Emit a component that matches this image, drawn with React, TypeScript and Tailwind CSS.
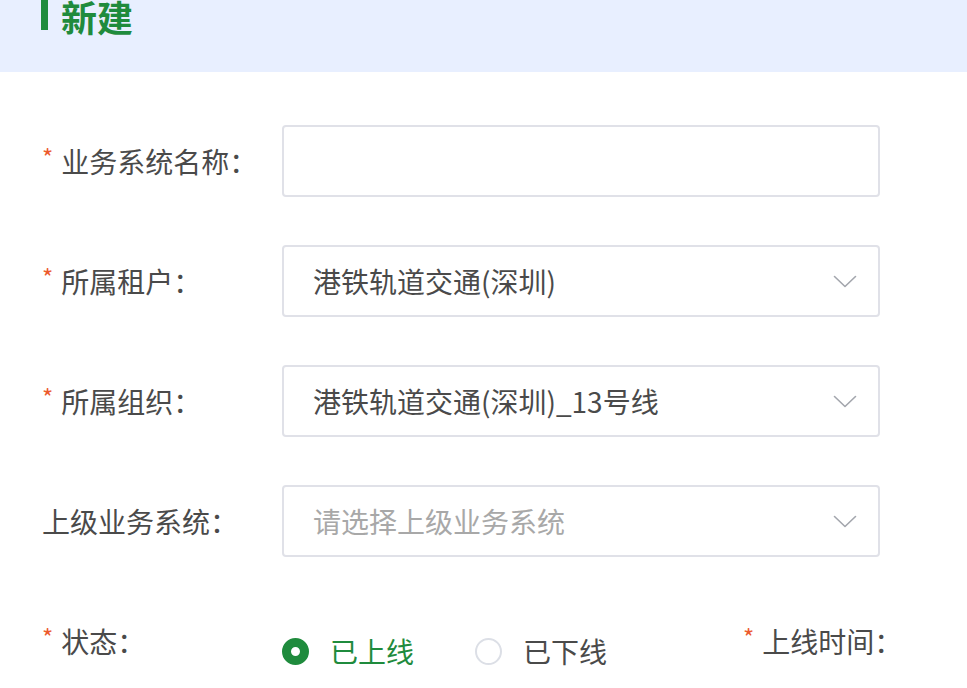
import { ReactNode } from 'react';

const FONT = { fontFamily: '"Noto Sans CJK SC", "Noto Sans", sans-serif' };

function Chevron() {
  return (
    <svg width="24" height="13" viewBox="0 0 24 13" fill="none" className="shrink-0">
      <path d="M1.5 1.5 L12 11.5 L22.5 1.5" stroke="#a3a6ad" strokeWidth="1.6" strokeLinecap="round" strokeLinejoin="round" />
    </svg>
  );
}

function Label({ children, required }: { children: ReactNode; required?: boolean }) {
  return (
    <div className="flex w-[240px] shrink-0 items-center text-[28px] leading-[36px] text-[#4a4a4a]">
      {required && <span className="mr-[8px] -mt-[8px] text-[24px] leading-[22px] text-[#ec5a2e]">*</span>}
      <span>{children}</span>
    </div>
  );
}

function Field({ label, required, children }: { label: string; required?: boolean; children: ReactNode }) {
  return (
    <div className="flex h-[72px] items-center">
      <Label required={required}>{label}</Label>
      {children}
    </div>
  );
}

function SelectBox({ value, placeholder }: { value?: string; placeholder?: string }) {
  return (
    <div className="flex h-[72px] w-[598px] items-center justify-between rounded-[4px] border-2 border-[#e0e1e8] bg-white pl-[29px] pr-[21px]">
      {value ? (
        <span className="text-[28px] leading-[36px] text-[#4a4a4a]">{value}</span>
      ) : (
        <span className="text-[28px] leading-[36px] text-[#a8a8a8]">{placeholder}</span>
      )}
      <Chevron />
    </div>
  );
}

export default function App() {
  return (
    <div className="h-[688px] w-[967px] overflow-hidden bg-white" style={FONT}>
      {/* Header band, scrolled partly out of view */}
      <div className="flex h-[72px] items-start bg-[#e8efff] pl-[41px]">
        <div className="h-[30px] w-[7px] bg-[#1f8b3d]" />
        <div className="-mt-[2px] ml-[13px] text-[36px] font-bold leading-[36px] text-[#1f8b3d]">新建</div>
      </div>

      {/* Form */}
      <div className="flex flex-col gap-[48px] pl-[42px] pt-[53px]">
        <Field label="业务系统名称：" required>
          <div className="h-[72px] w-[598px] rounded-[4px] border-2 border-[#e0e1e8] bg-white" />
        </Field>
        <Field label="所属租户：" required>
          <SelectBox value="港铁轨道交通(深圳)" />
        </Field>
        <Field label="所属组织：" required>
          <SelectBox value="港铁轨道交通(深圳)_13号线" />
        </Field>
        <Field label="上级业务系统：">
          <SelectBox placeholder="请选择上级业务系统" />
        </Field>

        <div className="flex h-[72px] items-start pt-[18px]">
          <Label required>状态：</Label>
          <div className="mt-[10px] flex w-[461px] shrink-0 items-center">
            <span className="h-[27px] w-[27px] rounded-full border-[9px] border-[#1f8b3d] bg-white" />
            <span className="ml-[21px] text-[28px] leading-[36px] text-[#1f8b3d]">已上线</span>
            <span className="ml-[61px] h-[27px] w-[27px] rounded-full border-2 border-[#dcdfe6] bg-white" />
            <span className="ml-[21px] text-[28px] leading-[36px] text-[#4a4a4a]">已下线</span>
          </div>
          <Label required>上线时间：</Label>
        </div>
      </div>
    </div>
  );
}
